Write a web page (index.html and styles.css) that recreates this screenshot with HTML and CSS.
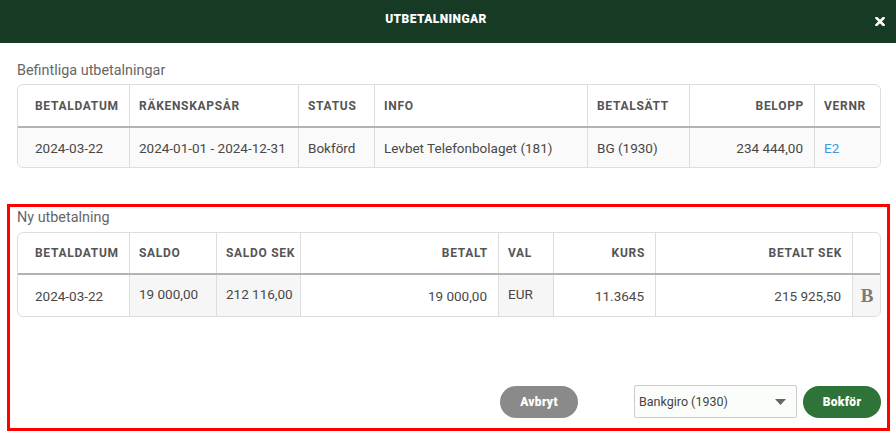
FILE: index.html
```
<!DOCTYPE html>
<html lang="sv">
<head>
<meta charset="utf-8">
<title>Utbetalningar</title>
<link rel="stylesheet" href="styles.css">
</head>
<body>
<div class="modal">
  <header class="modal-header">
    <h1 class="modal-title">UTBETALNINGAR</h1>
    <button class="close-btn" aria-label="Stäng">
      <svg width="10" height="9" viewBox="0 0 10 9"><path d="M1.5 1 L8.5 8 M8.5 1 L1.5 8" stroke="#fff" stroke-width="2.6" stroke-linecap="square"/></svg>
    </button>
  </header>
  <main class="modal-body">
    <section class="existing">
      <div class="section-label">Befintliga utbetalningar</div>
      <div class="table">
        <div class="row head cols1">
          <div class="cell first">BETALDATUM</div>
          <div class="cell">RÄKENSKAPSÅR</div>
          <div class="cell">STATUS</div>
          <div class="cell">INFO</div>
          <div class="cell">BETALSÄTT</div>
          <div class="cell right">BELOPP</div>
          <div class="cell">VERNR</div>
        </div>
        <div class="row body shaded cols1">
          <div class="cell first">2024-03-22</div>
          <div class="cell">2024-01-01 - 2024-12-31</div>
          <div class="cell">Bokförd</div>
          <div class="cell">Levbet Telefonbolaget (181)</div>
          <div class="cell">BG (1930)</div>
          <div class="cell right">234 444,00</div>
          <div class="cell"><a class="link" href="#">E2</a></div>
        </div>
      </div>
    </section>
    <section class="new-payment">
      <div class="section-label">Ny utbetalning</div>
      <div class="table">
        <div class="row head cols2 head2">
          <div class="cell first">BETALDATUM</div>
          <div class="cell">SALDO</div>
          <div class="cell">SALDO SEK</div>
          <div class="cell right">BETALT</div>
          <div class="cell">VAL</div>
          <div class="cell right">KURS</div>
          <div class="cell right">BETALT SEK</div>
          <div class="cell"></div>
        </div>
        <div class="row body cols2 body2">
          <div class="cell first input">2024-03-22</div>
          <div class="cell ro">19 000,00</div>
          <div class="cell ro">212 116,00</div>
          <div class="cell right input">19 000,00</div>
          <div class="cell ro">EUR</div>
          <div class="cell right input">11.3645</div>
          <div class="cell right input">215 925,50</div>
          <div class="cell ro bcell"><span class="b-icon">B</span></div>
        </div>
      </div>
      <div class="actions">
        <button class="btn btn-cancel">Avbryt</button>
        <div class="select">
          <span>Bankgiro (1930)</span>
          <svg width="11" height="6" viewBox="0 0 11 6"><path d="M0 0 H11 L5.5 6 Z" fill="#666"/></svg>
        </div>
        <button class="btn btn-ok">Bokför</button>
      </div>
    </section>
  </main>
</div>
</body>
</html>
```
FILE: styles.css
```
* { box-sizing: border-box; }
body {
  margin: 0;
  background: #fff;
  font-family: Roboto, "Liberation Sans", sans-serif;
  color: #444;
}
.modal-header {
  height: 43px;
  background: #163a24;
  display: flex;
  align-items: flex-start;
}
.modal-title {
  flex: 1;
  margin: 0;
  padding-top: 11px;
  text-align: center;
  color: #fff;
  font-size: 12px;
  line-height: 16px;
  font-weight: 900;
  letter-spacing: 0.4px;
}
.close-btn {
  width: 24px;
  padding: 17px 0 0 3px;
  margin: 0;
  border: 0;
  background: none;
  display: flex;
  justify-content: flex-start;
}
.modal-body {
  padding: 19px 0 0 0;
}
.existing {
  padding: 0 15px 0 17px;
}
.section-label {
  font-size: 14.4px;
  line-height: 18px;
  color: #666;
  margin-bottom: 4px;
}
.table {
  border: 1px solid #ddd;
  border-radius: 6px;
  overflow: hidden;
}
.row {
  display: grid;
}
.cols1 { grid-template-columns: 111px 169px 76px 213px 102px 125px 66px; }
.cols2 { grid-template-columns: 111px 87px 84px 198px 55px 102px 197px 28px; }
.cell {
  display: flex;
  align-items: center;
  padding: 0 10px 0 9px;
  border-left: 1px solid #ddd;
  white-space: nowrap;
}
.cell.first {
  border-left: 0;
  padding-left: 17px;
}
.cell.right {
  justify-content: flex-end;
  padding-right: 11px;
}
.row.head {
  height: 43px;
  border-bottom: 2px solid #b3b3b3;
}
.row.head .cell {
  font-size: 12px;
  font-weight: 700;
  letter-spacing: 0.7px;
  color: #555;
}
.row.head .cell.right { padding-right: 10px; }
.row.body {
  height: 39px;
  font-size: 13.5px;
  color: #484848;
}
.row.shaded { background: #fafafa; }
.link { color: #3d9be0; text-decoration: none; }
.new-payment {
  margin: 36px 6px 0 7px;
  border: 3px solid #ff0000;
  padding: 0 6px 10px 7px;
}
.new-payment .section-label {
  padding-top: 2px;
  margin-bottom: 5px;
}
.row.head2 { height: 42px; }
.row.body2 { height: 41px; }
.cell.ro {
  background: #f6f6f6;
  padding-bottom: 4px;
}
.cell.bcell {
  justify-content: center;
  padding: 0 0 0 1px;
}
.b-icon {
  font-family: "Liberation Serif", "DejaVu Serif", serif;
  font-weight: 700;
  font-size: 19px;
  line-height: 19px;
  color: #7a7a7a;
}
.actions {
  margin-top: 68px;
  display: flex;
  justify-content: flex-end;
  align-items: center;
}
.btn {
  height: 32px;
  width: 78px;
  border: 0;
  border-radius: 16px;
  color: #fff;
  font-family: Roboto, "Liberation Sans", sans-serif;
  font-size: 12px;
  font-weight: 900;
  letter-spacing: 0.3px;
}
.btn-cancel {
  background: #8a8a8a;
  margin-right: 56px;
}
.btn-ok {
  background: #2e7438;
}
.select {
  width: 163px;
  height: 33px;
  margin-right: 6px;
  border: 1px solid #ccc;
  border-radius: 2px;
  background: #fbfdfb;
  display: flex;
  align-items: center;
  justify-content: space-between;
  padding: 0 10px 0 4px;
  font-size: 12.5px;
  color: #444;
}
```
